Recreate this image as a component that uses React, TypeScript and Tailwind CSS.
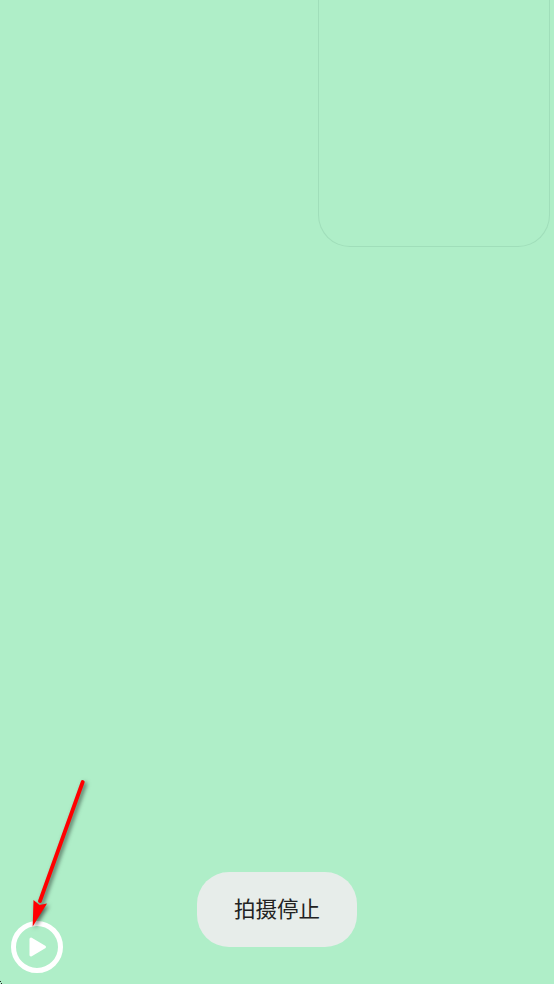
export default function App() {
  return (
    <div className="relative flex h-[984px] w-[554px] flex-col overflow-hidden bg-[#afeec8] font-['Noto_Sans_CJK_SC','Roboto',sans-serif]">
      {/* Preview window */}
      <div className="flex justify-end pr-[4px]">
        <div className="h-[247px] w-[232px] rounded-b-[32px] border border-t-0 border-[#a0debA]" />
      </div>

      {/* Toast */}
      <div className="mt-auto mb-[37px] flex justify-center">
        <div className="flex h-[75px] w-[160px] items-center justify-center rounded-[32px] bg-[#e7edea] pb-[3px] text-[21.5px] text-[#222222]">
          拍摄停止
        </div>
      </div>

      {/* Play button */}
      <div className="absolute bottom-[11px] left-[11px] flex h-[52px] w-[52px] items-center justify-center rounded-full border-[5px] border-white">
        <svg width="20" height="24" viewBox="0 0 20 24" className="ml-[2px]">
          <path d="M3 4 L16.5 12 L3 20 Z" fill="white" stroke="white" strokeWidth="3" strokeLinejoin="round" />
        </svg>
      </div>

      {/* Red annotation arrow */}
      <svg
        className="absolute left-0 top-[770px] drop-shadow-[2px_2px_2px_rgba(0,0,0,0.55)]"
        width="120"
        height="170"
        viewBox="0 0 120 170"
      >
        <path d="M82.7 12 L40 131" fill="none" stroke="#ff0000" strokeWidth="3.8" strokeLinecap="round" />
        <path d="M32.7 156.5 L33.5 130 L39.5 135 L47 133.5 Z" fill="#ff0000" />
      </svg>

      {/* Window corner */}
      <svg className="absolute bottom-0 left-0" width="4" height="4" viewBox="0 0 4 4">
        <path d="M0 1 H1 V2 H0 Z M1 3 H2 V4 H1 Z" fill="#222222" />
      </svg>
    </div>
  );
}
